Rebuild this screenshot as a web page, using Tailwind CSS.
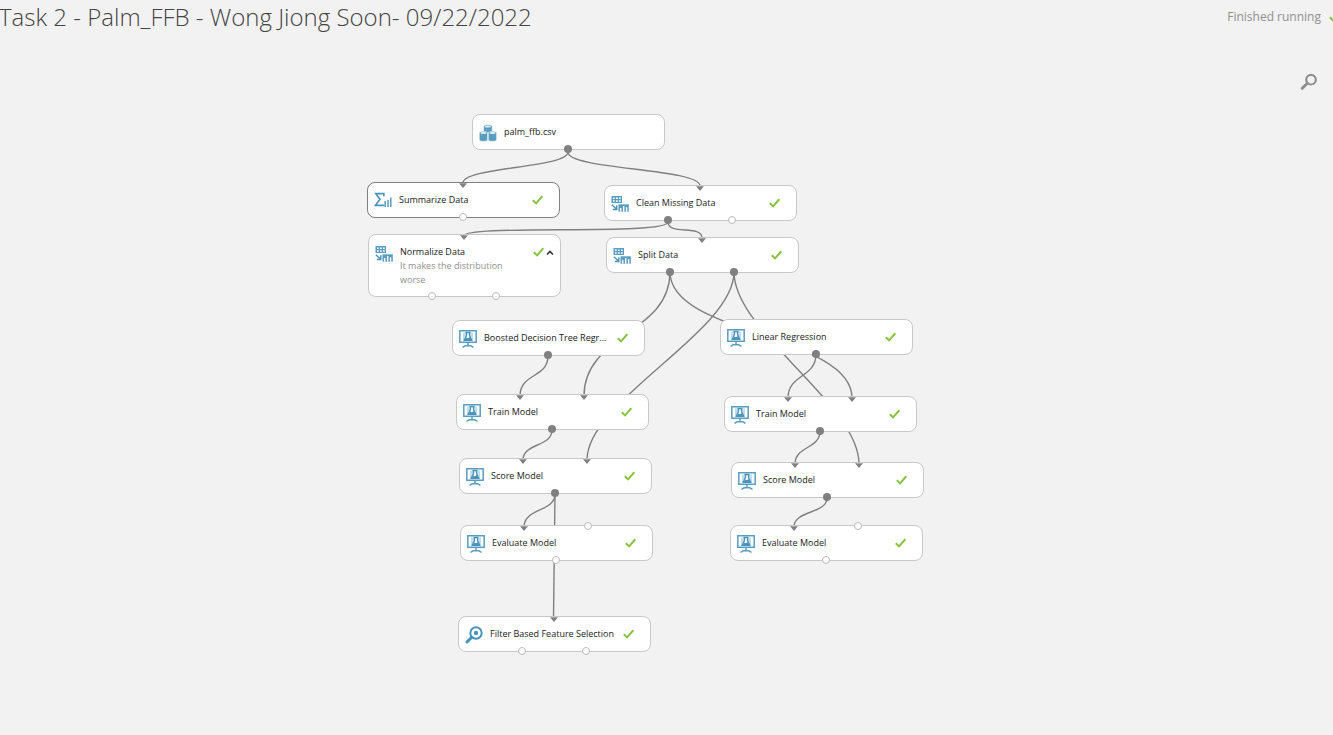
<!DOCTYPE html>
<html lang="en">
<head>
<meta charset="utf-8">
<title>Task 2 - Palm_FFB</title>
<script src="https://cdn.jsdelivr.net/npm/@tailwindcss/browser@4"></script>
</head>
<body class="min-h-screen overflow-hidden bg-[#f2f2f2] font-['Open_Sans','Noto_Sans',sans-serif] text-[#222]">

<svg class="hidden">
  <symbol id="check" viewBox="0 0 11 10"><path d="M.8 5.2 4.1 8.4 10.3 1.2" fill="none" stroke="#86c440" stroke-width="2"/></symbol>
  <symbol id="arrow" viewBox="0 0 8 5"><path d="M0 .3h8L4 5z" fill="#808080"/></symbol>
  <symbol id="model" viewBox="0 0 18 18">
    <path d="M.8.8h16.400v11.400H.8z" fill="#fff" stroke="#5b9dbf" stroke-width="1.500"/>
    <path d="M4 2.500h10v8H4z" fill="#c3dde9"/>
    <path d="M6.500 2.500h5M7.500 2.500v3L5.200 10.300h7.600L10.500 5.500v-3" fill="#fff" stroke="#4a93b9" stroke-width="1.300"/>
    <path d="M7.200 7.500l1.600.8 2.200-1.200 1.400 3H5.800z" fill="#4a93b9"/>
    <path d="M9 12.500V15.500M3.500 17.200c1.200 0 1.500-1.400 3-1.400h5c1.500 0 1.800 1.400 3 1.400" fill="none" stroke="#5b9dbf" stroke-width="1.500"/>
  </symbol>
  <symbol id="transform" viewBox="0 0 18 18">
    <path d="M.5 1h10.500v7H.5z" fill="#5b9dbf"/>
    <path d="M2 2.500h1.700v1.500H2zM5 2.500h1.700v1.500H5zM8 2.500h1.700v1.500H8zM2 5.300h1.700v1.500H2zM5 5.300h1.700v1.500H5zM8 5.300h1.700v1.500H8z" fill="#fff"/>
    <path d="M.8 9.800 5.300 13.800M5.800 10.300v4.200H1.800" fill="none" stroke="#4a93b9" stroke-width="1.400"/>
    <path d="M7.500 9.300h10.300v7.400H7.500z" fill="#5b9dbf"/>
    <path d="M9 13h1.400v3.700H9zM12 11h1.400v5.700H12zM14.900 12.300h1.400v4.400h-1.400z" fill="#fff"/>
  </symbol>
  <symbol id="dataset" viewBox="0 0 18 18">
    <g fill="#5b9dbf" stroke="#fff" stroke-width=".5">
      <path d="M4.600 2.200C4.600.2 13.200.2 13.200 2.200v5.600c0 1.500-8.600 1.500-8.600 0z"/>
      <path d="M.3 8.800c0-1.700 8.300-1.700 8.300 0v7.200c0 1.800-8.300 1.800-8.300 0zM9.300 8.800c0-1.700 8.300-1.700 8.300 0v7.200c0 1.800-8.300 1.800-8.300 0z"/>
    </g>
    <g fill="#e2f0f6"><ellipse cx="8.900" cy="2.500" rx="3.200" ry="1.100"/><ellipse cx="4.500" cy="9.100" rx="3.100" ry="1"/><ellipse cx="13.500" cy="9.100" rx="3.100" ry="1"/></g>
  </symbol>
  <symbol id="summary" viewBox="0 0 18 18">
    <path d="M9.800 4.300V1.700H1.800L6 7.300l-4.500 6h9" fill="none" stroke="#4a93b9" stroke-width="1.700"/>
    <path d="M11.200 9v6M14 8v7M16.800 5.500V15" fill="none" stroke="#5b9dbf" stroke-width="1.500"/>
  </symbol>
  <symbol id="feature" viewBox="0 0 18 18">
    <circle cx="11" cy="7" r="5.700" fill="#fff" stroke="#4a93b9" stroke-width="2"/>
    <circle cx="11" cy="7" r="2.200" fill="#4a93b9"/>
    <path d="M6.600 11.400 2 16" stroke="#4a93b9" stroke-width="3" stroke-linecap="round"/>
  </symbol>
</svg>

<header class="flex h-[34px] items-center justify-between">
  <h1 class="-ml-px text-2xl font-light whitespace-nowrap text-[#444]">Task 2 - Palm_FFB - Wong Jiong Soon- 09/22/2022</h1>
  <p class="-mr-2 flex items-center gap-2 text-xs whitespace-nowrap text-[#909090]">Finished running
    <svg class="h-3 w-3"><use href="#check"/></svg></p>
</header>

<button aria-label="Search" class="absolute top-[73px] right-[15px] h-[18px] w-[18px]">
  <svg viewBox="0 0 18 18" fill="none" stroke="#909090"><circle cx="11" cy="6.700" r="4.800" stroke-width="2.200"/><path d="M7.400 10.200 2.200 15.300" stroke-width="3" stroke-linecap="round"/></svg>
</button>

<main class="text-[9px]">
  <svg class="absolute top-0 left-0 h-full w-full" fill="none" stroke="#808080" stroke-width="1.400">
    <path d="M568 152C568 168 463 167 463 183"/>
    <path d="M568 152C568 170 700 168 700 186"/>
    <path d="M668 222C668 236 464 224 464 236"/>
    <path d="M668 222C668 236 702 224 702 238"/>
    <path d="M670 272C670 334 584 334 584 396"/>
    <path d="M670 272C670 335 852 335 852 398"/>
    <path d="M734 272C734 332 587 400 587 460"/>
    <path d="M734 272C734 332 859 404 859 464"/>
    <path d="M548 356C548 378 520 373 520 396"/>
    <path d="M816 354C816 378 788 374 788 398"/>
    <path d="M552 430C552 447 523 443 523 460"/>
    <path d="M820 431C820 449 795 446 795 464"/>
    <path d="M555 494C555 512 524 508 524 527"/>
    <path d="M555 494L553.500 618"/>
    <path d="M827 498C827 514 794 510 794 527"/>
  </svg>

  <div class="absolute top-[114px] left-[472px] flex h-9 w-[193px] items-center rounded-lg border border-[#c8c8c8] bg-white pr-4 pl-1.5">
    <svg class="mt-0.5 h-[18px] w-[18px] shrink-0"><use href="#dataset"/></svg><span class="ml-[7px]">palm_ffb.csv</span>
    <i class="absolute -bottom-1 left-[91px] h-2 w-2 rounded-full bg-[#808080]"></i>
  </div>

  <div class="absolute top-[182px] left-[367px] flex h-9 w-[193px] items-center rounded-lg border border-[#808080] bg-white pr-4 pl-1.5">
    <svg class="mt-0.5 h-[18px] w-[18px] shrink-0"><use href="#summary"/></svg><span class="ml-[7px]">Summarize Data</span>
    <svg class="ml-auto h-2.5 w-[11px]"><use href="#check"/></svg>
    <svg class="absolute top-0 left-[91px] h-[5px] w-2"><use href="#arrow"/></svg>
    <i class="absolute -bottom-1 left-[91px] h-2 w-2 rounded-full border border-[#bbb] bg-white"></i>
  </div>

  <div class="absolute top-[185px] left-[604px] flex h-9 w-[193px] items-center rounded-lg border border-[#c8c8c8] bg-white pr-4 pl-1.5">
    <svg class="mt-0.5 h-[18px] w-[18px] shrink-0"><use href="#transform"/></svg><span class="ml-[7px]">Clean Missing Data</span>
    <svg class="ml-auto h-2.5 w-[11px]"><use href="#check"/></svg>
    <svg class="absolute top-0 left-[91px] h-[5px] w-2"><use href="#arrow"/></svg>
    <i class="absolute -bottom-1 left-[59px] h-2 w-2 rounded-full bg-[#808080]"></i>
    <i class="absolute -bottom-1 left-[123px] h-2 w-2 rounded-full border border-[#bbb] bg-white"></i>
  </div>

  <div class="absolute top-[234px] left-[368px] flex h-[63px] w-[193px] items-start rounded-lg border border-[#c8c8c8] bg-white pt-2.5 pr-1.5 pl-1.5">
    <svg class="h-[18px] w-[18px] shrink-0"><use href="#transform"/></svg>
    <div class="ml-[7px] w-28 leading-[14px]"><p>Normalize Data</p><p class="text-[#8f8f8f]">It makes the distribution worse</p></div>
    <svg class="mt-0.5 ml-auto h-2.5 w-[11px]"><use href="#check"/></svg>
    <button aria-label="Collapse comment" class="mt-1 ml-0.5 h-2 w-2"><svg viewBox="0 0 8 8" fill="none" stroke="#333" stroke-width="1.600"><path d="M1 5.500 4 2.500l3 3"/></svg></button>
    <svg class="absolute top-0 left-[91px] h-[5px] w-2"><use href="#arrow"/></svg>
    <i class="absolute -bottom-1 left-[59px] h-2 w-2 rounded-full border border-[#bbb] bg-white"></i>
    <i class="absolute -bottom-1 left-[123px] h-2 w-2 rounded-full border border-[#bbb] bg-white"></i>
  </div>

  <div class="absolute top-[237px] left-[606px] flex h-9 w-[193px] items-center rounded-lg border border-[#c8c8c8] bg-white pr-4 pl-1.5">
    <svg class="mt-0.5 h-[18px] w-[18px] shrink-0"><use href="#transform"/></svg><span class="ml-[7px]">Split Data</span>
    <svg class="ml-auto h-2.5 w-[11px]"><use href="#check"/></svg>
    <svg class="absolute top-0 left-[91px] h-[5px] w-2"><use href="#arrow"/></svg>
    <i class="absolute -bottom-1 left-[59px] h-2 w-2 rounded-full bg-[#808080]"></i>
    <i class="absolute -bottom-1 left-[123px] h-2 w-2 rounded-full bg-[#808080]"></i>
  </div>

  <div class="absolute top-[320px] left-[452px] flex h-9 w-[193px] items-center rounded-lg border border-[#c8c8c8] bg-white pr-4 pl-1.5">
    <svg class="mt-0.5 h-[18px] w-[18px] shrink-0"><use href="#model"/></svg><span class="ml-[7px] whitespace-nowrap">Boosted Decision Tree Regr...</span>
    <svg class="ml-auto h-2.5 w-[11px]"><use href="#check"/></svg>
    <i class="absolute -bottom-1 left-[91px] h-2 w-2 rounded-full bg-[#808080]"></i>
  </div>

  <div class="absolute top-[319px] left-[720px] flex h-9 w-[193px] items-center rounded-lg border border-[#c8c8c8] bg-white pr-4 pl-1.5">
    <svg class="mt-0.5 h-[18px] w-[18px] shrink-0"><use href="#model"/></svg><span class="ml-[7px]">Linear Regression</span>
    <svg class="ml-auto h-2.5 w-[11px]"><use href="#check"/></svg>
    <i class="absolute -bottom-1 left-[91px] h-2 w-2 rounded-full bg-[#808080]"></i>
  </div>

  <div class="absolute top-[394px] left-[456px] flex h-9 w-[193px] items-center rounded-lg border border-[#c8c8c8] bg-white pr-4 pl-1.5">
    <svg class="mt-0.5 h-[18px] w-[18px] shrink-0"><use href="#model"/></svg><span class="ml-[7px]">Train Model</span>
    <svg class="ml-auto h-2.5 w-[11px]"><use href="#check"/></svg>
    <svg class="absolute top-0 left-[59px] h-[5px] w-2"><use href="#arrow"/></svg>
    <svg class="absolute top-0 left-[123px] h-[5px] w-2"><use href="#arrow"/></svg>
    <i class="absolute -bottom-1 left-[91px] h-2 w-2 rounded-full bg-[#808080]"></i>
  </div>

  <div class="absolute top-[396px] left-[724px] flex h-9 w-[193px] items-center rounded-lg border border-[#c8c8c8] bg-white pr-4 pl-1.5">
    <svg class="mt-0.5 h-[18px] w-[18px] shrink-0"><use href="#model"/></svg><span class="ml-[7px]">Train Model</span>
    <svg class="ml-auto h-2.5 w-[11px]"><use href="#check"/></svg>
    <svg class="absolute top-0 left-[59px] h-[5px] w-2"><use href="#arrow"/></svg>
    <svg class="absolute top-0 left-[123px] h-[5px] w-2"><use href="#arrow"/></svg>
    <i class="absolute -bottom-1 left-[91px] h-2 w-2 rounded-full bg-[#808080]"></i>
  </div>

  <div class="absolute top-[458px] left-[459px] flex h-9 w-[193px] items-center rounded-lg border border-[#c8c8c8] bg-white pr-4 pl-1.5">
    <svg class="mt-0.5 h-[18px] w-[18px] shrink-0"><use href="#model"/></svg><span class="ml-[7px]">Score Model</span>
    <svg class="ml-auto h-2.5 w-[11px]"><use href="#check"/></svg>
    <svg class="absolute top-0 left-[59px] h-[5px] w-2"><use href="#arrow"/></svg>
    <svg class="absolute top-0 left-[123px] h-[5px] w-2"><use href="#arrow"/></svg>
    <i class="absolute -bottom-1 left-[91px] h-2 w-2 rounded-full bg-[#808080]"></i>
  </div>

  <div class="absolute top-[462px] left-[731px] flex h-9 w-[193px] items-center rounded-lg border border-[#c8c8c8] bg-white pr-4 pl-1.5">
    <svg class="mt-0.5 h-[18px] w-[18px] shrink-0"><use href="#model"/></svg><span class="ml-[7px]">Score Model</span>
    <svg class="ml-auto h-2.5 w-[11px]"><use href="#check"/></svg>
    <svg class="absolute top-0 left-[59px] h-[5px] w-2"><use href="#arrow"/></svg>
    <svg class="absolute top-0 left-[123px] h-[5px] w-2"><use href="#arrow"/></svg>
    <i class="absolute -bottom-1 left-[91px] h-2 w-2 rounded-full bg-[#808080]"></i>
  </div>

  <div class="absolute top-[525px] left-[460px] flex h-9 w-[193px] items-center rounded-lg border border-[#c8c8c8] bg-white pr-4 pl-1.5">
    <svg class="mt-0.5 h-[18px] w-[18px] shrink-0"><use href="#model"/></svg><span class="ml-[7px]">Evaluate Model</span>
    <svg class="ml-auto h-2.5 w-[11px]"><use href="#check"/></svg>
    <svg class="absolute top-0 left-[59px] h-[5px] w-2"><use href="#arrow"/></svg>
    <i class="absolute -top-1 left-[123px] h-2 w-2 rounded-full border border-[#bbb] bg-white"></i>
    <i class="absolute -bottom-1 left-[91px] h-2 w-2 rounded-full border border-[#bbb] bg-white"></i>
  </div>

  <div class="absolute top-[525px] left-[730px] flex h-9 w-[193px] items-center rounded-lg border border-[#c8c8c8] bg-white pr-4 pl-1.5">
    <svg class="mt-0.5 h-[18px] w-[18px] shrink-0"><use href="#model"/></svg><span class="ml-[7px]">Evaluate Model</span>
    <svg class="ml-auto h-2.5 w-[11px]"><use href="#check"/></svg>
    <svg class="absolute top-0 left-[59px] h-[5px] w-2"><use href="#arrow"/></svg>
    <i class="absolute -top-1 left-[123px] h-2 w-2 rounded-full border border-[#bbb] bg-white"></i>
    <i class="absolute -bottom-1 left-[91px] h-2 w-2 rounded-full border border-[#bbb] bg-white"></i>
  </div>

  <div class="absolute top-[616px] left-[458px] flex h-9 w-[193px] items-center rounded-lg border border-[#c8c8c8] bg-white pr-4 pl-1.5">
    <svg class="mt-0.5 h-[18px] w-[18px] shrink-0"><use href="#feature"/></svg><span class="ml-[7px] whitespace-nowrap">Filter Based Feature Selection</span>
    <svg class="ml-auto h-2.5 w-[11px]"><use href="#check"/></svg>
    <svg class="absolute top-0 left-[91px] h-[5px] w-2"><use href="#arrow"/></svg>
    <i class="absolute -bottom-1 left-[59px] h-2 w-2 rounded-full border border-[#bbb] bg-white"></i>
    <i class="absolute -bottom-1 left-[123px] h-2 w-2 rounded-full border border-[#bbb] bg-white"></i>
  </div>
</main>
</body>
</html>
